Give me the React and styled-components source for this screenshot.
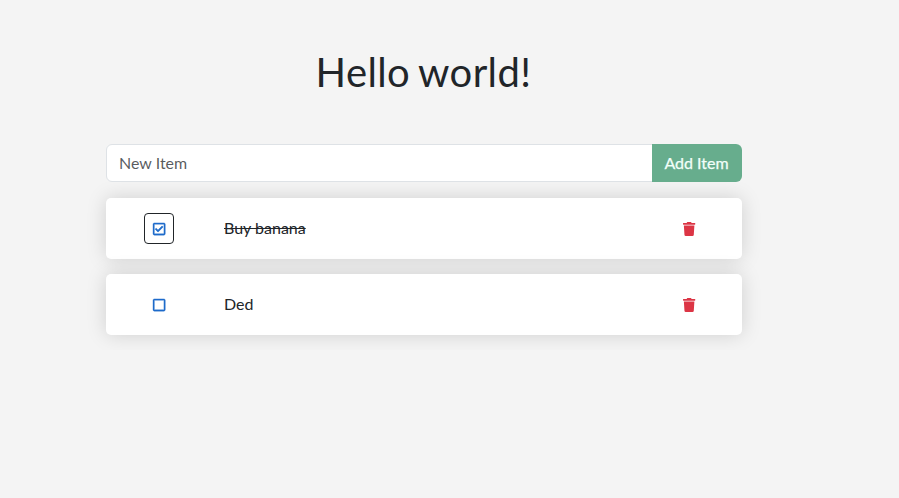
import React, { useState } from "react";
import styled, { createGlobalStyle } from "styled-components";

const GlobalStyle = createGlobalStyle`
  *, *::before, *::after { box-sizing: border-box; }
  body {
    margin: 0;
    background: #f4f4f4;
    color: #212529;
    font: 400 16px/1.5 Lato, sans-serif;
  }
`;

const Page = styled.main`
  width: 636px;
  margin-left: 106px;
  padding-top: 48px;
`;

const Title = styled.h1`
  margin: 0 0 48px;
  padding-right: 1px;
  font-size: 40px;
  font-weight: 400;
  line-height: 48px;
  letter-spacing: 0.4px;
  word-spacing: -2px;
  text-align: center;
`;

const InputGroup = styled.form`
  display: flex;
  height: 38px;
  margin-bottom: 16px;
`;

const TextInput = styled.input`
  flex: 1;
  min-width: 0;
  padding: 6px 12px;
  border: 1px solid #dee2e6;
  border-radius: 6px 0 0 6px;
  background: #fff;
  color: #212529;
  font: inherit;
  outline: none;
  &::placeholder { color: rgba(33, 37, 41, 0.75); opacity: 1; }
`;

const AddButton = styled.button`
  width: 90px;
  margin-left: -1px;
  padding: 0 1px 0 0;
  border: 0;
  border-radius: 0 6px 6px 0;
  background: #67ad8d;
  color: #f2fff9;
  font: inherit;
  -webkit-text-stroke: 0.25px currentColor;
`;

const ItemRow = styled.div`
  display: grid;
  grid-template-columns: 106px 424px 106px;
  align-items: center;
  height: 61px;
  margin-bottom: 15px;
  border-radius: 5px;
  background: #fff;
  box-shadow: 0 0 20px rgba(0, 0, 0, 0.15);
`;

const ItemName = styled.span`
  padding: 0 0 2px 12px;
  text-decoration: ${(p) => (p.$done ? "line-through" : "none")};
`;

const IconButton = styled.button`
  display: flex;
  align-items: center;
  justify-content: center;
  justify-self: center;
  width: 30px;
  height: 31px;
  padding: 0;
  border: 1px solid ${(p) => (p.$outlined ? "#212529" : "transparent")};
  border-radius: 4px;
  background: transparent;
  color: ${(p) => p.$color};
`;

const Glyph = styled.svg.attrs({ viewBox: "0 0 448 512", fill: "currentColor" })`
  width: 12.25px;
  height: 14px;
  overflow: visible;
  stroke: currentColor;
  stroke-width: ${(p) => p.$stroke || 0};
`;

const CheckedIcon = () => (
  <Glyph $stroke={14}>
    <path d="M400 32H48C21.49 32 0 53.49 0 80v352c0 26.51 21.49 48 48 48h352c26.51 0 48-21.49 48-48V80c0-26.51-21.49-48-48-48zm0 400H48V80h352v352zm-35.864-241.724L191.547 361.48c-4.705 4.667-12.303 4.637-16.97-.068l-90.781-91.516c-4.667-4.705-4.637-12.303.069-16.971l22.719-22.536c4.705-4.667 12.303-4.637 16.97.069l59.792 60.277 141.352-140.216c4.705-4.667 12.303-4.637 16.97.068l22.536 22.718c4.667 4.706 4.637 12.304-.068 16.971z" />
  </Glyph>
);

const UncheckedIcon = () => (
  <Glyph $stroke={14}>
    <path d="M400 32H48C21.5 32 0 53.5 0 80v352c0 26.5 21.5 48 48 48h352c26.5 0 48-21.5 48-48V80c0-26.5-21.5-48-48-48zm-6 400H54c-3.3 0-6-2.7-6-6V86c0-3.3 2.7-6 6-6h340c3.3 0 6 2.7 6 6v340c0 3.3-2.7 6-6 6z" />
  </Glyph>
);

const TrashIcon = () => (
  <Glyph>
    <path d="M432 32H312l-9.4-18.7A24 24 0 0 0 281.1 0H166.8a23.72 23.72 0 0 0-21.4 13.3L136 32H16A16 16 0 0 0 0 48v32a16 16 0 0 0 16 16h416a16 16 0 0 0 16-16V48a16 16 0 0 0-16-16zM53.2 467a48 48 0 0 0 47.9 45h245.8a48 48 0 0 0 47.9-45L416 128H32z" />
  </Glyph>
);

const initialItems = [
  { id: 1, name: "Buy banana", done: true, active: true },
  { id: 2, name: "Ded", done: false, active: false },
];

export default function App() {
  const [items, setItems] = useState(initialItems);
  const [name, setName] = useState("");

  const toggle = (id) =>
    setItems(items.map((i) => ({ ...i, active: i.id === id, done: i.id === id ? !i.done : i.done })));
  const remove = (id) => setItems(items.filter((i) => i.id !== id));
  const add = (e) => {
    e.preventDefault();
    if (!name) return;
    setItems([...items, { id: Date.now(), name, done: false, active: false }]);
    setName("");
  };

  return (
    <>
      <GlobalStyle />
      <Page>
        <Title>Hello world!</Title>
        <InputGroup onSubmit={add}>
          <TextInput placeholder="New Item" value={name} onChange={(e) => setName(e.target.value)} />
          <AddButton>Add Item</AddButton>
        </InputGroup>
        {items.map((item) => (
          <ItemRow key={item.id}>
            <IconButton
              $color="#1f6ccb"
              $outlined={item.active}
              onClick={() => toggle(item.id)}
              aria-label="Toggle item"
            >
              {item.done ? <CheckedIcon /> : <UncheckedIcon />}
            </IconButton>
            <ItemName $done={item.done}>{item.name}</ItemName>
            <IconButton $color="#dc3545" onClick={() => remove(item.id)} aria-label="Remove item">
              <TrashIcon />
            </IconButton>
          </ItemRow>
        ))}
      </Page>
    </>
  );
}
